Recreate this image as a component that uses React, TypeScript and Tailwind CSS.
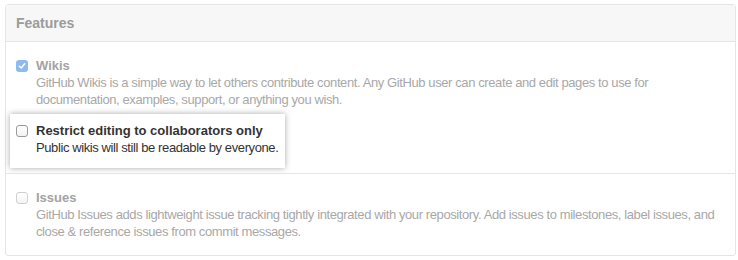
import React from "react";

function Box({ checked, faded }: { checked?: boolean; faded?: boolean }) {
  if (checked) {
    return (
      <span className="mt-[3px] flex h-[12px] w-[12px] shrink-0 items-center justify-center rounded-[3px] bg-[#8fbaf0]">
        <svg width="8" height="8" viewBox="0 0 8 8">
          <path d="M1.3 4.2 L3.2 6 L6.7 1.8" fill="none" stroke="#fff" strokeWidth="1.5" strokeLinecap="round" strokeLinejoin="round" />
        </svg>
      </span>
    );
  }
  return (
    <span
      className={
        "mt-[3px] block h-[12px] w-[12px] shrink-0 rounded-[3px] border bg-gradient-to-b from-white to-[#f3f3f3] " +
        (faded ? "border-[#d0d0d0]" : "border-[#9a9a9a]")
      }
    />
  );
}

export default function App() {
  return (
    <div
      className="h-[260px] w-[738px] bg-white pl-[5px] pt-[4px]"
      style={{ fontFamily: '"Liberation Sans", Arial, sans-serif' }}
    >
      <div className="h-[252px] w-[731px] rounded-[3px] border border-[#e5e5e5]">
        <div className="flex h-[37px] items-center border-b border-[#e5e5e5] bg-[#f7f7f7] pl-[10px] text-[14px] font-bold text-[#9b9b9b]">
          Features
        </div>
        <div className="px-[10px] pb-[5px] pt-[15px] text-[13px] leading-[17px]">
          <div className="flex gap-[8px]">
            <Box checked />
            <div>
              <div className="font-bold text-[#a3a3a3]">Wikis</div>
              <div className="whitespace-nowrap tracking-[-0.4px] text-[#a8a8a8]">
                GitHub Wikis is a simple way to let others contribute content. Any GitHub user can create and edit pages to use for
                <br />
                documentation, examples, support, or anything you wish.
              </div>
            </div>
          </div>
          <div className="-ml-[6px] mt-[6px] w-fit bg-white pb-[12px] pl-[6px] pr-[7px] pt-[8px] shadow-[0_0_6px_rgba(0,0,0,0.35)]">
            <div className="flex gap-[8px]">
              <Box />
              <div>
                <div className="font-bold text-[#333]">Restrict editing to collaborators only</div>
                <div className="tracking-[-0.4px] text-[#333]">Public wikis will still be readable by everyone.</div>
              </div>
            </div>
          </div>
        </div>
        <div className="border-t border-[#e5e5e5] px-[10px] pt-[15px] text-[13px] leading-[17px]">
          <div className="flex gap-[8px]">
            <Box faded />
            <div>
              <div className="font-bold text-[#a3a3a3]">Issues</div>
              <div className="whitespace-nowrap tracking-[-0.4px] text-[#a8a8a8]">
                GitHub Issues adds lightweight issue tracking tightly integrated with your repository. Add issues to milestones, label issues, and
                <br />
                close &amp; reference issues from commit messages.
              </div>
            </div>
          </div>
        </div>
      </div>
    </div>
  );
}
